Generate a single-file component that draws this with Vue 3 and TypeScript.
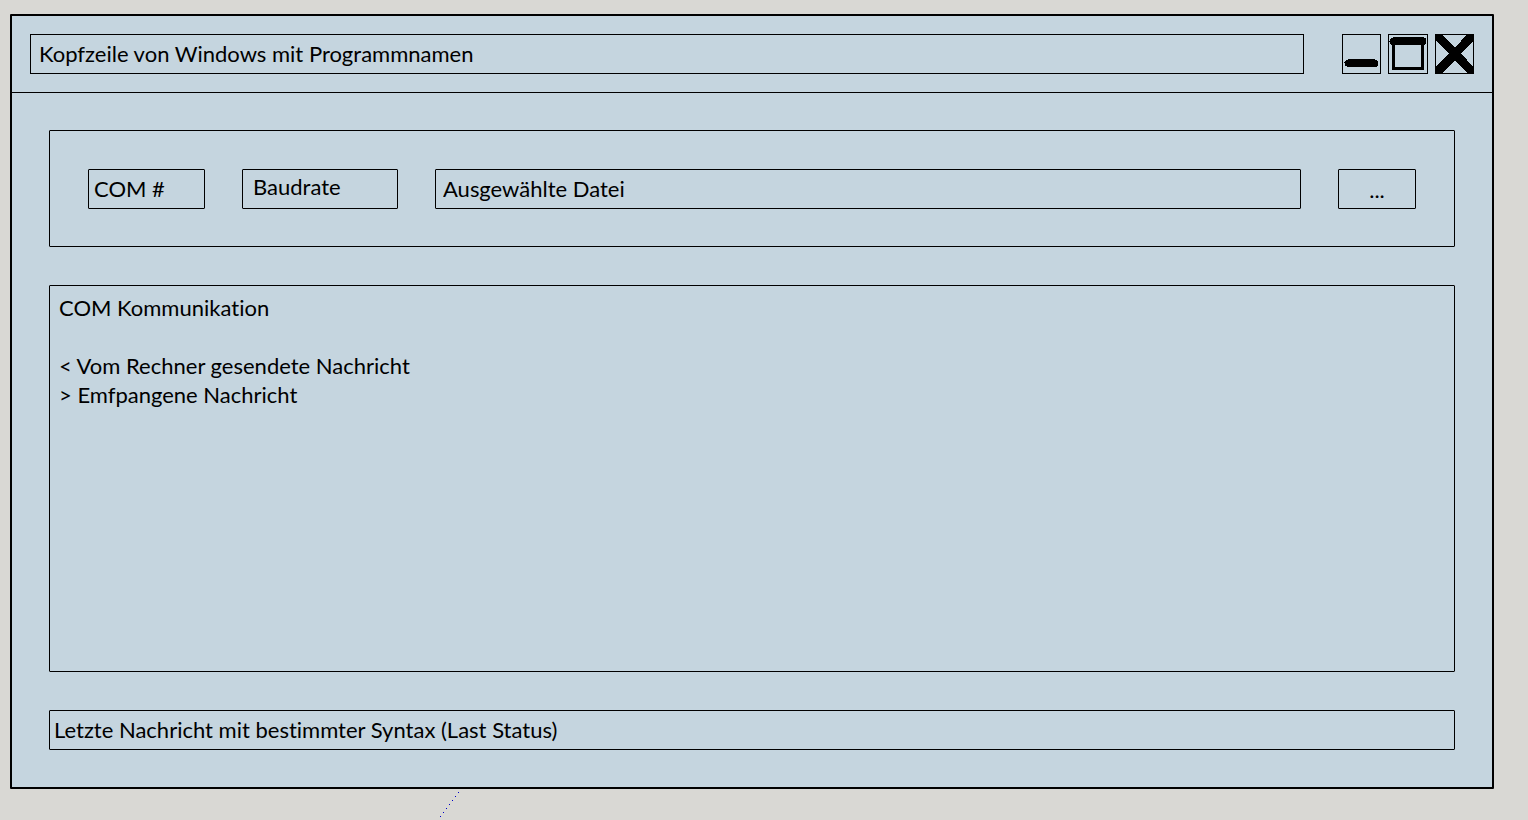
<script setup lang="ts">
import { ref } from 'vue'

const title = 'Kopfzeile von Windows mit Programmnamen'
const port = ref('COM #')
const baud = ref('Baudrate')
const file = ref('Ausgewählte Datei')
const log = ref(
  ['COM Kommunikation', '', '< Vom Rechner gesendete Nachricht', '> Emfpangene Nachricht'].join('\n'),
)
const status = ref('Letzte Nachricht mit bestimmter Syntax (Last Status)')
const dots = [0, 1, 2, 3, 4, 5, 6]
</script>

<template>
  <div class="desktop">
    <main class="window">
      <header class="titlebar">
        <h1 class="title">{{ title }}</h1>
        <div class="controls">
          <button type="button" class="control" aria-label="Minimieren">
            <svg width="39" height="40" viewBox="0 0 39 40" shape-rendering="crispEdges">
              <path d="M2 28h1v-1h1v-1h2v-1h27v1h2v1h1v5h-1v1h-30v-1h-2v-3h-1z" />
            </svg>
          </button>
          <button type="button" class="control" aria-label="Maximieren">
            <svg width="40" height="40" viewBox="0 0 40 40" shape-rendering="crispEdges">
              <path d="M1 7h1V5h1V4h2V3h31v1h2v6h-1v1h-1v25H4V11H3V10H2V8H1zM7 11v22h26V11z" fill-rule="evenodd" />
            </svg>
          </button>
          <button type="button" class="control" aria-label="Schließen">
            <svg width="39" height="40" viewBox="0 0 39 40" shape-rendering="crispEdges">
              <path d="M0 0H7L20 14L32 0H39V6L26 19L39 34V40H33L20 26L6 40H0V34L14 19L0 6z" />
            </svg>
          </button>
        </div>
      </header>

      <div class="content">
        <section class="settings">
          <select v-model="port" class="field port" aria-label="COM-Port">
            <option>COM #</option>
          </select>
          <select v-model="baud" class="field baud" aria-label="Baudrate">
            <option>Baudrate</option>
          </select>
          <input v-model="file" class="field file" type="text" readonly aria-label="Datei" />
          <button type="button" class="field browse" aria-label="Datei auswählen">...</button>
        </section>
        <textarea v-model="log" class="log" readonly aria-label="COM Kommunikation"></textarea>
        <output class="status">{{ status }}</output>
      </div>
    </main>
    <svg class="trace" viewBox="0 0 19 25" shape-rendering="crispEdges" aria-hidden="true">
      <rect v-for="n in dots" :key="n" :x="n * 3" :y="24 - n * 4" width="1" height="1" />
    </svg>
  </div>
</template>

<style>
body {
  margin: 0;
  background: #d9d8d4;
}
</style>

<style scoped>
.desktop {
  position: relative;
  box-sizing: border-box;
  display: flex;
  min-height: 100vh;
  padding: 14px 34px 31px 10px;
  background: #d9d8d4;
  color: #000;
  font: 22px/29px Lato, 'Noto Sans', sans-serif;
  font-variant-ligatures: none;
}
.desktop *,
.desktop *::before {
  box-sizing: border-box;
}
.window {
  flex: 1;
  min-width: 0;
  display: flex;
  flex-direction: column;
  border: 2px solid #000;
  border-radius: 1px;
  background: #c5d5df;
}
.titlebar {
  display: flex;
  gap: 38px;
  padding: 18px;
  border-bottom: 1px solid #000;
}
.title {
  flex: 1;
  min-width: 0;
  height: 40px;
  margin: 0;
  padding: 4px 8px;
  border: 1px solid #000;
  font-size: inherit;
  font-weight: inherit;
  white-space: nowrap;
}
.controls {
  display: flex;
  gap: 7px;
}
.control {
  display: block;
  padding: 0;
  border: 0;
  outline: 1px solid #000;
  outline-offset: -1px;
  background: none;
}
.control svg {
  display: block;
}
.content {
  flex: 1;
  display: flex;
  flex-direction: column;
  gap: 38px;
  padding: 37px;
}
.settings {
  display: flex;
  gap: 37px;
  padding: 38px 38px 37px;
  border: 1px solid #000;
  border-radius: 1px;
}
.field {
  appearance: none;
  height: 40px;
  margin: 0;
  padding: 4px 7px 6px;
  border: 1px solid #000;
  border-radius: 1px;
  background: none;
  color: inherit;
  font: inherit;
  font-variant-ligatures: none;
}
.port {
  width: 117px;
  padding: 4px 5px 6px;
}
.baud {
  width: 156px;
  padding: 2px 10px 8px;
}
.file {
  flex: 1;
  min-width: 0;
}
.browse {
  width: 78px;
  padding: 5px 0;
}
.log {
  flex: 1;
  display: block;
  width: 100%;
  min-height: 134px;
  margin: 0;
  padding: 7px 9px;
  border: 1px solid #000;
  border-radius: 1px;
  outline: 0;
  resize: none;
  background: none;
  color: inherit;
  font: inherit;
  font-variant-ligatures: none;
}
.status {
  display: block;
  height: 40px;
  padding: 4px;
  border: 1px solid #000;
  border-radius: 1px;
  white-space: nowrap;
}
.trace {
  position: absolute;
  left: 440px;
  bottom: 3px;
  width: 19px;
  height: 25px;
  fill: #0000c8;
}
</style>
